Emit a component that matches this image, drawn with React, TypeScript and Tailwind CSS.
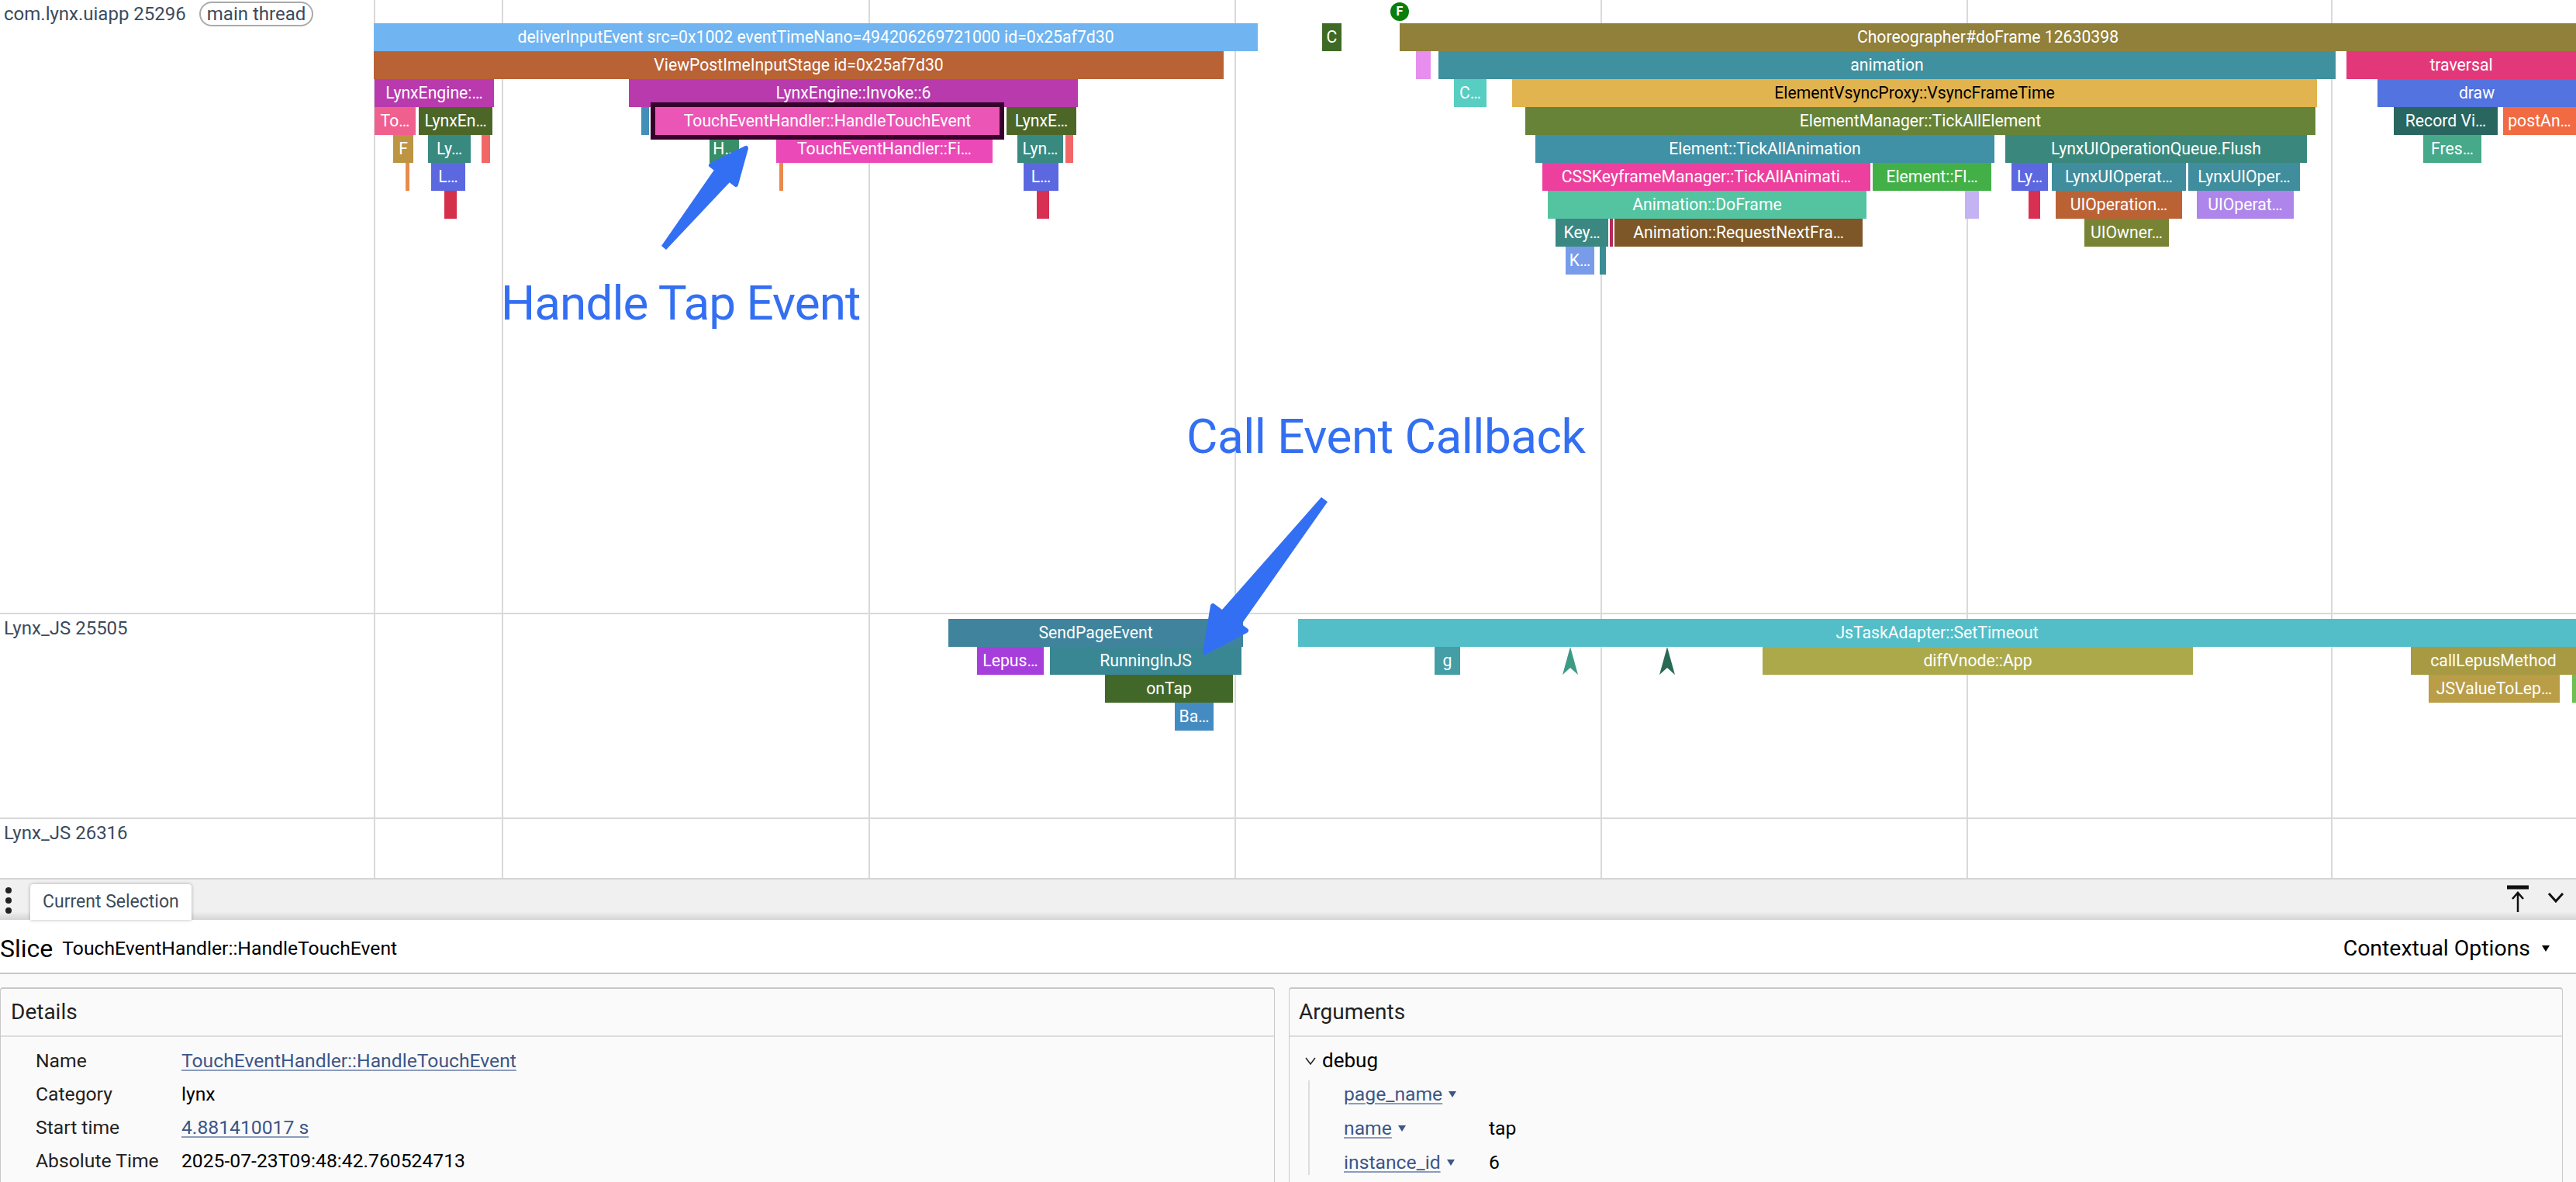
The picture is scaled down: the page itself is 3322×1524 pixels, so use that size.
import React from "react";

type S = [number, number, number, string, string?, string?];

const gridX = [482, 647, 1120, 1592, 2064, 2536, 3006];

// [row, left, right, colour, label, text colour]
const mainSlices: S[] = [
  [0, 482, 1622, "#70b5f1", "deliverInputEvent src=0x1002 eventTimeNano=494206269721000 id=0x25af7d30"],
  [0, 1705, 1730, "#3e6a26", "C"],
  [0, 1805, 3322, "#91803a", "Choreographer#doFrame 12630398"],
  [1, 482, 1578, "#b86236", "ViewPostImeInputStage id=0x25af7d30"],
  [1, 1826, 1845, "#e88eee"],
  [1, 1855, 3012, "#40919f", "animation"],
  [1, 3026, 3322, "#e2387a", "traversal"],
  [2, 483, 637, "#b83aad", "LynxEngine:…"],
  [2, 811, 1390, "#b83aad", "LynxEngine::Invoke::6"],
  [2, 1875, 1917, "#58cdc2", "C…"],
  [2, 1950, 2988, "#e1b44f", "ElementVsyncProxy::VsyncFrameTime", "#000000"],
  [2, 3066, 3322, "#5273e0", "draw"],
  [3, 483, 536, "#f0608f", "To…"],
  [3, 540, 635, "#4c6628", "LynxEn…"],
  [3, 827, 837, "#428fb7"],
  [3, 1298, 1388, "#4c6628", "LynxE…"],
  [3, 1967, 2986, "#668337", "ElementManager::TickAllElement"],
  [3, 3087, 3221, "#2a6660", "Record Vi…"],
  [3, 3228, 3322, "#f26a42", "postAn…"],
  [4, 507, 533, "#bd9442", "F"],
  [4, 552, 607, "#38897f", "Ly…"],
  [4, 621, 632, "#f26666"],
  [4, 915, 953, "#388e68", "H…"],
  [4, 1001, 1280, "#ea49b7", "TouchEventHandler::Fi…"],
  [4, 1312, 1371, "#38897f", "Lyn…"],
  [4, 1374, 1384, "#f26666"],
  [4, 1980, 2572, "#4090a6", "Element::TickAllAnimation"],
  [4, 2586, 2975, "#3a887d", "LynxUIOperationQueue.Flush"],
  [4, 3125, 3200, "#46a98a", "Fres…"],
  [5, 523, 528, "#e98a4c"],
  [5, 556, 600, "#5c68e0", "L…"],
  [5, 1005, 1010, "#e98a4c"],
  [5, 1320, 1365, "#5c68e0", "L…"],
  [5, 1989, 2412, "#ec3f9e", "CSSKeyframeManager::TickAllAnimati…"],
  [5, 2415, 2568, "#43b047", "Element::Fl…"],
  [5, 2594, 2641, "#5c68e0", "Ly…"],
  [5, 2646, 2819, "#3f8d9d", "LynxUIOperat…"],
  [5, 2822, 2966, "#3f8d9d", "LynxUIOper…"],
  [6, 573, 589, "#d42f4b"],
  [6, 1337, 1353, "#d83052"],
  [6, 1996, 2407, "#53c3a0", "Animation::DoFrame"],
  [6, 2534, 2552, "#c4b3f2"],
  [6, 2616, 2631, "#d83052"],
  [6, 2651, 2814, "#bb6235", "UIOperation…"],
  [6, 2833, 2958, "#ae85ea", "UIOperat…"],
  [7, 2006, 2074, "#3b8781", "Key…"],
  [7, 2076, 2080, "#b9285a"],
  [7, 2082, 2402, "#7d5727", "Animation::RequestNextFra…"],
  [7, 2688, 2797, "#788334", "UIOwner…"],
  [8, 2019, 2056, "#789bea", "K…"],
  [8, 2063, 2071, "#3b8e95"],
];

const jsSlices: S[] = [
  [0, 1223, 1603, "#3f849c", "SendPageEvent"],
  [0, 1674, 3322, "#53bec8", "JsTaskAdapter::SetTimeout"],
  [1, 1260, 1346, "#a63edb", "Lepus…"],
  [1, 1354, 1601, "#3a8794", "RunningInJS"],
  [1, 1850, 1883, "#459ea5", "g"],
  [1, 2273, 2828, "#aca94b", "diffVnode::App"],
  [1, 3109, 3322, "#a79a43", "callLepusMethod"],
  [2, 1425, 1590, "#426829", "onTap"],
  [2, 3132, 3301, "#b99e47", "JSValueToLep…"],
  [2, 3317, 3322, "#6fbf53"],
  [3, 1515, 1565, "#448bc2", "Ba…"],
];

function Slices({ data, top }: { data: S[]; top: number }) {
  return (
    <>
      {data.map(([row, l, r, bg, label, fg], i) => (
        <div
          key={i}
          className="absolute h-[36px] flex items-center justify-center overflow-hidden whitespace-nowrap text-[21.2px] leading-none"
          style={{ left: l, width: r - l, top: top + row * 36, backgroundColor: bg, color: fg ?? "#ffffff" }}
        >
          {label}
        </div>
      ))}
    </>
  );
}

function GridLines() {
  return (
    <>
      {gridX.map((x) => (
        <div key={x} className="absolute top-0 bottom-0 w-[2px] bg-[#d9d9d9]" style={{ left: x }} />
      ))}
    </>
  );
}

function Caret({ color = "#000000" }: { color?: string }) {
  return (
    <svg width="10" height="8" viewBox="0 0 10 8" className="shrink-0">
      <path d="M0 0H10L5 8Z" fill={color} />
    </svg>
  );
}

function Track({ name, chip, height, children }: { name: string; chip?: string; height: string; children?: React.ReactNode }) {
  return (
    <div className={`relative w-full overflow-hidden ${height}`}>
      <GridLines />
      <div className="absolute left-[5px] top-0 flex items-center gap-[17px] h-[36px] text-[24px] text-[#3c4b5d] whitespace-nowrap">
        <span>{name}</span>
        {chip && (
          <span className="flex items-center h-[32px] px-[8px] rounded-full border-2 border-[#aaaaaa] text-[24px]">{chip}</span>
        )}
      </div>
      {children}
    </div>
  );
}

function Row({ label, children }: { label: string; children: React.ReactNode }) {
  return (
    <div className="flex items-center h-[43px]">
      <div className="w-[188px] shrink-0 text-[#222222]">{label}</div>
      {children}
    </div>
  );
}

const linkClass = "text-[#3c5688] underline decoration-[#8b9cbd] decoration-2 underline-offset-[3px]";

function ArgRow({ label, value }: { label: string; value?: string }) {
  return (
    <div className="flex items-center h-[44px] pl-[44px]">
      <div className="w-[187px] shrink-0 flex items-center gap-[8px]">
        <span className={linkClass}>{label}</span>
        <Caret color="#3c5688" />
      </div>
      {value && <span className="text-black">{value}</span>}
    </div>
  );
}

export default function App() {
  return (
    <div className="relative w-[3322px] h-[1524px] overflow-hidden bg-white font-['Roboto',sans-serif] flex flex-col">
      <div className="flex flex-col relative">
        <Track name="com.lynx.uiapp 25296" chip="main thread" height="h-[790px]">
          <Slices data={mainSlices} top={30} />
          {/* selected slice */}
          <div className="absolute left-[839px] top-[132px] w-[456px] h-[48px] border-[6px] border-[#36002b] bg-[#eb55b5] text-white text-[21.2px] leading-none flex items-center justify-center whitespace-nowrap">
            TouchEventHandler::HandleTouchEvent
          </div>
          {/* flow marker */}
          <div className="absolute left-[1793px] top-[3px] w-[24px] h-[24px] rounded-full bg-[#0b7d0b] text-white text-[16px] font-bold flex items-center justify-center leading-none">
            F
          </div>
        </Track>
        <div className="h-[2px] bg-[#d9d9d9]" />
        <Track name="Lynx_JS 25505" height="h-[262px]">
          <Slices data={jsSlices} top={6} />
          <svg className="absolute left-[2014px] top-[42px]" width="22" height="36" viewBox="0 0 22 36">
            <path d="M11 0L21 36L11 27L1 36Z" fill="#3d9a85" />
          </svg>
          <svg className="absolute left-[2139px] top-[42px]" width="22" height="36" viewBox="0 0 22 36">
            <path d="M11 0L21 36L11 27L1 36Z" fill="#296a55" />
          </svg>
        </Track>
        <div className="h-[2px] bg-[#d9d9d9]" />
        <Track name="Lynx_JS 26316" height="h-[76px]" />
        {/* annotations */}
        <svg className="absolute left-0 top-0 pointer-events-none" width="3322" height="900" viewBox="0 0 3322 900">
          <path
            d="M917 213L962 191L949 238Z"
            fill="#336ff2"
            stroke="#336ff2"
            strokeWidth="6"
            strokeLinejoin="round"
          />
          <path d="M853 317L859 322L941 235L930 215L921 219Z" fill="#336ff2" />
          <path
            d="M1607 813L1554 841L1564 781Z"
            fill="#336ff2"
            stroke="#336ff2"
            strokeWidth="6"
            strokeLinejoin="round"
          />
          <path d="M1704 641L1712 647L1603 802L1590 815L1565 795L1577 785Z" fill="#336ff2" />
        </svg>
        <div className="absolute left-[646px] top-[357px] text-[62px] leading-[68px] tracking-[-0.93px] text-[#336ff2] whitespace-nowrap">
          Handle Tap Event
        </div>
        <div className="absolute left-[1530px] top-[529px] text-[62px] leading-[68px] tracking-[-0.45px] text-[#336ff2] whitespace-nowrap">
          Call Event Callback
        </div>
      </div>

      {/* tab bar */}
      <div className="h-[2px] bg-[#d4d4d4] shrink-0" />
      <div className="relative h-[52px] shrink-0 bg-gradient-to-b from-[#f0f0f0] from-80% to-[#d4d4d4] flex items-end">
        <div className="w-[39px] h-full flex flex-col items-center justify-start pt-[10px] gap-[5px] pr-[17px]">
          <div className="w-[8px] h-[8px] rounded-full bg-[#222222]" />
          <div className="w-[8px] h-[8px] rounded-full bg-[#222222]" />
          <div className="w-[8px] h-[8px] rounded-full bg-[#222222]" />
        </div>
        <div className="h-[46px] w-[208px] bg-white rounded-t-[4px] shadow-[0_0_4px_rgba(0,0,0,0.3)] flex items-center pl-[16px] text-[23px] text-[#3c4b5d] whitespace-nowrap">
          Current Selection
        </div>
        <div className="ml-auto flex items-start h-full pt-[6px] pr-[15px] gap-[24px]">
          <svg width="28" height="36" viewBox="0 0 28 36">
            <path d="M0 4H28" stroke="#111111" strokeWidth="5" />
            <path d="M14 36V11M7 19L14 11L21 19" stroke="#111111" strokeWidth="2.5" fill="none" />
          </svg>
          <svg width="22" height="14" viewBox="0 0 22 14" className="mt-[10px]">
            <path d="M2 2L11 12L20 2" stroke="#111111" strokeWidth="3" fill="none" />
          </svg>
        </div>
      </div>

      {/* header */}
      <div className="h-[70px] shrink-0 bg-white border-b-2 border-[#c8c8c8] flex items-center justify-between pr-[34px] pt-[6px]">
        <div className="flex items-center gap-[12px] whitespace-nowrap text-black">
          <span className="text-[32px]">Slice</span>
          <span className="text-[24.7px]">TouchEventHandler::HandleTouchEvent</span>
        </div>
        <div className="flex items-center gap-[15px] text-[28.4px] text-black whitespace-nowrap">
          Contextual Options
          <Caret />
        </div>
      </div>

      {/* details */}
      <div className="flex-1 min-h-0 bg-[#fafafa] flex gap-[18px] pt-[17px] pr-[17px] text-[24.7px]">
        <div className="w-[1644px] shrink-0 border-t-2 border-l border-r border-[#c8c8c8] rounded-t-[4px]">
          <div className="h-[62px] flex items-center pl-[13px] border-b-2 border-[#dddddd] text-[28px] text-[#222222]">Details</div>
          <div className="pl-[45px] pt-[9px]">
            <Row label="Name"><span className={linkClass}>TouchEventHandler::HandleTouchEvent</span></Row>
            <Row label="Category"><span className="text-black">lynx</span></Row>
            <Row label="Start time"><span className={linkClass}>4.881410017 s</span></Row>
            <Row label="Absolute Time"><span className="text-black">2025-07-23T09:48:42.760524713</span></Row>
          </div>
        </div>
        <div className="flex-1 border-t-2 border-l border-r border-[#c8c8c8] rounded-t-[4px]">
          <div className="h-[62px] flex items-center pl-[12px] border-b-2 border-[#dddddd] text-[28px] text-[#222222]">Arguments</div>
          <div className="pt-[9px] pl-[20px]">
            <div className="flex items-center h-[43px] gap-[8px] text-black text-[26px]">
              <svg width="14" height="10" viewBox="0 0 14 10">
                <path d="M1 1L7 9L13 1" stroke="#222222" strokeWidth="1.5" fill="none" />
              </svg>
              debug
            </div>
            <div className="mt-[4px] ml-[4px] border-l-2 border-[#dddddd] h-[122px] flex flex-col">
              <div className="-mt-[4px]">
                <ArgRow label="page_name" />
                <ArgRow label="name" value="tap" />
                <ArgRow label="instance_id" value="6" />
              </div>
            </div>
          </div>
        </div>
      </div>
    </div>
  );
}
